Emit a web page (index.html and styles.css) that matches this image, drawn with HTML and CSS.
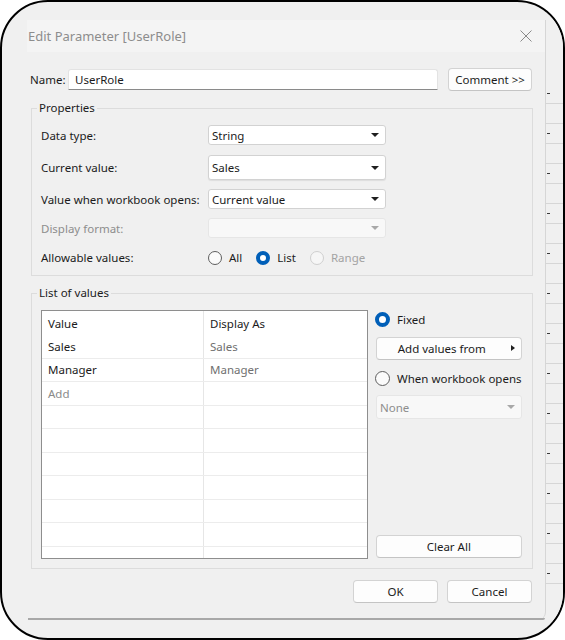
FILE: index.html
```html
<!DOCTYPE html>
<html>
<head>
<meta charset="utf-8">
<link rel="stylesheet" href="styles.css">
</head>
<body>
<div class="frame">
  <div class="dialog">
    <div class="titlebar">
      <span class="title">Edit Parameter [UserRole]</span>
      <svg class="close" width="12" height="12" viewBox="0 0 12 12"><path d="M0.5 0.5 L11.5 11.5 M11.5 0.5 L0.5 11.5" stroke="#8a8a8a" stroke-width="1" fill="none"/></svg>
    </div>
    <div class="body">
      <div class="name-row">
        <span class="name-label">Name:</span>
        <div class="input">UserRole</div>
        <div class="btn comment">Comment &gt;&gt;</div>
      </div>

      <fieldset class="group props">
        <legend>Properties</legend>
        <div class="prop-grid">
          <div class="prow r1"><span class="plabel">Data type:</span><div class="select"><span>String</span><i class="caret"></i></div></div>
          <div class="prow r2"><span class="plabel">Current value:</span><div class="select tall"><span>Sales</span><i class="caret"></i></div></div>
          <div class="prow r3"><span class="plabel">Value when workbook opens:</span><div class="select"><span>Current value</span><i class="caret"></i></div></div>
          <div class="prow r4"><span class="plabel disabled">Display format:</span><div class="select off"><span></span><i class="caret"></i></div></div>
          <div class="prow r5"><span class="plabel">Allowable values:</span>
            <div class="radios">
              <span class="radio"><i class="dot"></i>All</span>
              <span class="radio on"><i class="dot"></i>List</span>
              <span class="radio dis"><i class="dot"></i>Range</span>
            </div>
          </div>
        </div>
      </fieldset>

      <fieldset class="group listgroup">
        <legend>List of values</legend>
        <div class="list-body">
          <div class="table">
            <div class="trow head"><div class="c1">Value</div><div class="c2">Display As</div></div>
            <div class="trow"><div class="c1">Sales</div><div class="c2 muted">Sales</div></div>
            <div class="trow"><div class="c1">Manager</div><div class="c2 muted">Manager</div></div>
            <div class="trow"><div class="c1 add">Add</div><div class="c2"></div></div>
            <div class="trow"><div class="c1"></div><div class="c2"></div></div>
            <div class="trow"><div class="c1"></div><div class="c2"></div></div>
            <div class="trow"><div class="c1"></div><div class="c2"></div></div>
            <div class="trow"><div class="c1"></div><div class="c2"></div></div>
            <div class="trow"><div class="c1"></div><div class="c2"></div></div>
            <div class="trow"><div class="c1"></div><div class="c2"></div></div>
            <div class="trow"><div class="c1"></div><div class="c2"></div></div>
          </div>
          <div class="side">
            <span class="radio on side-radio fixed"><i class="dot"></i>Fixed</span>
            <div class="btn addvals"><span>Add values from</span><i class="rarrow"></i></div>
            <span class="radio side-radio when"><i class="dot"></i>When workbook opens</span>
            <div class="select off none"><span>None</span><i class="caret"></i></div>
            <div class="btn clear">Clear All</div>
          </div>
        </div>
      </fieldset>

      <div class="footer">
        <div class="btn ok">OK</div>
        <div class="btn cancel">Cancel</div>
      </div>
    </div>
    <div class="edge"></div>
  </div>
  <div class="strip"><div class="ruler"></div></div>
</div>
</body>
</html>
```

FILE: styles.css
```css
* { box-sizing: border-box; }
html, body { margin: 0; padding: 0; background: #ffffff; }
body {
  font-family: "Noto Sans", "Open Sans", sans-serif;
  font-size: 11.5px;
  color: #1b1b1b;
}

.frame {
  width: 565px;
  height: 640px;
  border: 2px solid #000;
  border-radius: 48px;
  overflow: hidden;
  background: #f0f0f0;
  display: flex;
}

.dialog {
  width: 544px;
  height: 600px;
  margin-top: 18px;
  flex: none;
  display: flex;
  flex-direction: column;
  border-right: 1px solid #d6d6d6;
  border-bottom-right-radius: 8px;
}

.titlebar {
  height: 32px;
  margin-left: 25px;
  background: #f4f4f4;
  display: flex;
  align-items: center;
}
.title {
  font-size: 13px;
  color: #8d8d8d;
  padding-left: 1px;
}
.close { margin-left: auto; margin-right: 13px; }

.body {
  padding: 0 12px 0 28px;
  display: flex;
  flex-direction: column;
}

.name-row {
  margin-top: 16px;
  height: 23px;
  display: flex;
  align-items: center;
}
.name-label { width: 38px; }
.input {
  width: 370px;
  height: 21px;
  background: #fff;
  border: 1px solid #e3e3e3;
  border-bottom: 1px solid #8a8a8a;
  border-radius: 3px 3px 0 0;
  padding-left: 6px;
  display: flex;
  align-items: center;
}

.btn {
  background: #fdfdfd;
  border: 1px solid #d3d3d3;
  border-bottom-color: #c4c4c4;
  border-radius: 4px;
  display: flex;
  align-items: center;
  justify-content: center;
  color: #1b1b1b;
}
.comment { width: 84px; height: 23px; margin-left: 10px; }

.group {
  border: 1px solid #dcdcdc;
  margin: 9px 0 0 1px;
  padding: 0;
  min-width: 0;
}
.group legend {
  padding: 0 2px;
  margin-left: 5px;
  line-height: 16px;
}

.prop-grid { padding: 4px 0 3px 9px; }
.prow { display: flex; align-items: center; }
.r1 { height: 30px; }
.r2 { height: 35px; }
.r3 { height: 28px; }
.r4 { height: 30px; }
.r5 { height: 29px; }
.plabel { width: 167px; }
.plabel.disabled { color: #8d8d8d; }

.select {
  width: 178px;
  height: 20px;
  background: #fff;
  border: 1px solid #d2d2d2;
  border-radius: 3px;
  display: flex;
  align-items: center;
  padding: 0 6px 0 3px;
}
.select.tall { height: 25px; box-shadow: 0 1px 1px rgba(0,0,0,0.08); }
.select.off { background: #f8f8f8; border-color: #e6e6e6; color: #8d8d8d; }
.caret {
  margin-left: auto;
  width: 0; height: 0;
  border-left: 4px solid transparent;
  border-right: 4px solid transparent;
  border-top: 4px solid #1f1f1f;
}
.select.off .caret { border-top-color: #a8a8a8; }

.radios { display: flex; align-items: center; }
.radio { display: flex; align-items: center; }
.radios .radio { margin-right: 14px; }
.dot {
  width: 14px; height: 14px;
  border-radius: 50%;
  border: 1px solid #5e5e5e;
  background: #fbfbfb;
  margin-right: 7px;
  flex: none;
}
.radio.on .dot {
  border: 4px solid #005fb8;
  background: #fff;
}
.radio.dis { color: #a3a3a3; }
.radio.dis .dot { border-color: #cfcfcf; background: #f6f6f6; }

.list-body {
  display: flex;
  padding: 9px 12px 9px 9px;
}
.table {
  width: 327px;
  height: 249px;
  border: 1px solid #8e8e8e;
  background: #fff;
  overflow: hidden;
  flex: none;
}
.trow {
  display: grid;
  grid-template-columns: 162px 1fr;
  height: 23.5px;
  border-bottom: 1px solid #ececec;
}
.trow.head { height: 24px; border-bottom: none; }
.trow > div { display: flex; align-items: center; }
.c1 { border-right: 1px solid #e6e6e6; padding-left: 6px; }
.c2 { padding-left: 6px; }
.muted { color: #707070; }
.add { color: #8a8a8a; }

.side {
  flex: 1;
  margin-left: 8px;
  display: flex;
  flex-direction: column;
}
.side-radio { height: 19px; }
.side-radio .dot { width: 15px; height: 15px; margin-right: 7px; margin-left: -1px; }
.addvals { height: 23px; margin-top: 8px; position: relative; }
.addvals span { margin-right: 14px; }
.rarrow {
  position: absolute;
  right: 6px;
  top: 7px;
  width: 0; height: 0;
  border-top: 3.5px solid transparent;
  border-bottom: 3.5px solid transparent;
  border-left: 4px solid #1f1f1f;
}
.when { margin-top: 9px; height: 18px; white-space: nowrap; }
.none { width: auto; height: 24px; margin-top: 8px; padding-left: 3px; }
.clear { height: 23px; margin-top: auto; margin-bottom: 1px; }

.footer {
  margin-top: 11px;
  display: flex;
  justify-content: flex-end;
  gap: 9px;
  padding-right: 1px;
}
.footer .btn { width: 85px; height: 23px; }

.edge {
  margin-top: auto;
  margin-left: 26px;
  height: 2px;
  background: #a8a8a8;
  border-bottom-right-radius: 6px;
}

.strip {
  flex: 1;
  background: #f0f0f0;
}
.ruler {
  margin-top: 91px;
  height: 505px;
  background-image:
    linear-gradient(to bottom, #3a3a3a 0 1px, transparent 1px),
    linear-gradient(to bottom, #d6d6d6 0 1px, transparent 1px);
  background-size: 3px 40px, 100% 20px;
  background-position: 1px 0, 0 10px;
  background-repeat: repeat-y, repeat-y;
}
```
